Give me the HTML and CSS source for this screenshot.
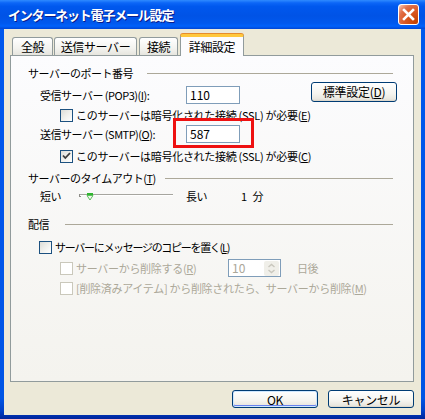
FILE: index.html
```html
<!DOCTYPE html>
<html lang="ja">
<head>
<meta charset="utf-8">
<title>インターネット電子メール設定</title>
<link rel="stylesheet" href="styles.css">
</head>
<body>
<div class="window">
  <div class="titlebar">
    <span class="title">インターネット電子メール設定</span>
    <span class="close">
      <svg width="19" height="19" viewBox="0 0 19 19"><path d="M5 5 L14 14 M14 5 L5 14" stroke="#fff" stroke-width="2.6" stroke-linecap="square" fill="none"/></svg>
    </span>
  </div>
  <div class="client">
    <div class="tabs">
      <span class="tab t1">全般</span>
      <span class="tab t2">送信サーバー</span>
      <span class="tab t3">接続</span>
      <span class="tab active t4">詳細設定</span>
    </div>
    <div class="panel">
      <div class="row heading r-a">
        <span class="htext hw-port">サーバーのポート番号</span><span class="rule"></span>
      </div>
      <div class="row r-b">
        <span class="label">受信サーバー (POP3)(<u>I</u>):</span>
        <span class="input">110</span>
        <span class="btn btn-std">標準設定(<u>D</u>)</span>
      </div>
      <div class="row r-c">
        <span class="check"></span><span class="ctext">このサーバーは暗号化された接続 (SSL) が必要(<u>E</u>)</span>
      </div>
      <div class="row r-d">
        <span class="label">送信サーバー (SMTP)(<u>O</u>):</span>
        <span class="input">587</span>
        <span class="mark"></span>
      </div>
      <div class="row r-e">
        <span class="check checked"><svg width="11" height="11" viewBox="0 0 11 11"><path d="M2 4.5 L4.3 7 L9 2" stroke="#3c3c3c" stroke-width="1.8" fill="none"/></svg></span><span class="ctext">このサーバーは暗号化された接続 (SSL) が必要(<u>C</u>)</span>
      </div>
      <div class="row heading r-f">
        <span class="htext hw-timeout">サーバーのタイムアウト(<u>T</u>)</span><span class="rule"></span>
      </div>
      <div class="row r-g">
        <span class="s-short">短い</span>
        <svg class="slider" width="95" height="14" viewBox="0 0 95 14">
          <rect x="0" y="5" width="2" height="3" fill="#8f8e89"/>
          <rect x="1" y="5" width="93" height="1" fill="#a6a59f"/>
          <rect x="1" y="6" width="93" height="1" fill="#ffffff"/>
          <rect x="8" y="4" width="6" height="2" fill="#2fb52f"/>
          <path d="M8 6.5 L14 6.5 L11 11 Z" fill="#f4f4f0" stroke="#4cb84c" stroke-width="0.9"/>
        </svg>
        <span class="s-long">長い</span>
        <span class="s-val">1 分</span>
      </div>
      <div class="row heading r-h">
        <span class="htext hw-deliv">配信</span><span class="rule"></span>
      </div>
      <div class="row r-i">
        <span class="check"></span><span class="ctext tight">サーバーにメッセージのコピーを置く(<u>L</u>)</span>
      </div>
      <div class="row r-j">
        <span class="jwrap"><span class="check disabled"></span><span class="ctext dis">サーバーから削除する(<u>R</u>)</span></span>
        <span class="spin"><span class="spin-val">10</span><span class="spin-btn"><svg width="15" height="15" viewBox="0 0 15 15"><path d="M4.5 6 L7.5 3.5 L10.5 6 M4.5 9 L7.5 11.5 L10.5 9" stroke="#c9c7bd" stroke-width="1.4" fill="none"/></svg></span></span>
        <span class="days dis">日後</span>
      </div>
      <div class="row r-k">
        <span class="check disabled"></span><span class="ctext dis">[削除済みアイテム] から削除されたら、サーバーから削除(<u>M</u>)</span>
      </div>
    </div>
    <div class="buttons">
      <span class="btn btn-default">OK</span>
      <span class="btn">キャンセル</span>
    </div>
  </div>
</div>
</body>
</html>
```

FILE: styles.css
```css
* { box-sizing: border-box; }
html, body { margin: 0; padding: 0; }
body {
  width: 425px;
  height: 419px;
  overflow: hidden;
  background: #0055e5;
  font-family: "Noto Sans CJK JP", "Noto Sans", sans-serif;
  font-size: 11px;
  letter-spacing: -0.5px;
  color: #000;
}
u { text-decoration: underline; text-underline-offset: 1px; }

.window {
  width: 425px;
  height: 419px;
  display: flex;
  flex-direction: column;
  background: linear-gradient(to bottom, #0058ee 0, #0055e5 95%, #0040c8 98%, #00249a 100%);
}

.titlebar {
  height: 29px;
  flex: none;
  display: flex;
  align-items: center;
  padding: 0 6px 1px 8px;
  background: linear-gradient(to bottom, #2f8bff 0%, #0c66f7 10%, #0058ee 22%, #0053e6 55%, #0058ee 80%, #0061fb 90%, #0046d5 100%);
}
.title {
  flex: 1;
  color: #fff;
  font-weight: bold;
  font-size: 13px;
  letter-spacing: -1.2px;
  text-shadow: 1px 1px 0 #0a1d8c;
}
.close {
  width: 21px;
  height: 21px;
  display: flex;
  align-items: center;
  justify-content: center;
  border: 1px solid #fff;
  border-radius: 3px;
  background: radial-gradient(circle at 90% 90%, #c44100 0%, #dc5a26 50%, #e0704a 72%, #f6b39a 92%, #ffffff 100%);
}

.client {
  flex: 1;
  margin: 0 4px 4px;
  background: #ece9d8;
  padding: 5px 7px 0 6px;
  display: flex;
  flex-direction: column;
}

.tabs {
  height: 21px;
  display: flex;
  align-items: flex-end;
  padding-left: 2px;
  position: relative;
  z-index: 1;
}
.tab {
  height: 18px;
  border: 1px solid #919b9c;
  border-bottom: none;
  border-radius: 3px 3px 0 0;
  background: linear-gradient(to bottom, #ffffff, #f3f3ef 60%, #e6e5de);
  display: flex;
  align-items: center;
  justify-content: center;
  font-size: 12px;
  letter-spacing: -0.4px;
}
.t1 { width: 41px; margin-right: 1px; }
.t2 { width: 83px; margin-right: 2px; }
.t3 { width: 39px; margin-right: 2px; }
.t4 { width: 64px; }
.tab.active {
  height: 22px;
  margin-bottom: -1px;
  background: #fcfcfe;
  border-top: 3px solid #ffc83c;
  box-shadow: 0 -1px 0 #e68b2c;
  padding-bottom: 1px;
}

.panel {
  height: 327px;
  border: 1px solid #919b9c;
  background: linear-gradient(to bottom, #fcfcfe, #f4f3ee);
  position: relative;
}

.row {
  display: flex;
  align-items: center;
  height: 14px;
  line-height: 14px;
  white-space: nowrap;
}
.heading { padding-left: 17px; padding-right: 20px; }
.rule { flex: 1; height: 1px; background: #aca899; }
.hw-port { width: 119px; }
.hw-timeout { width: 137px; }
.hw-deliv { width: 37px; }

.r-a { margin-top: 10px; }
.r-b { margin-top: 2px; height: 22px; align-items: flex-start; padding-left: 29px; }
.r-b .label { margin-top: 6px; }
.r-b .input { margin-top: 4px; }
.r-c { margin-top: 4px; padding-left: 49px; }
.r-d { margin-top: 3px; height: 18px; padding-left: 29px; position: relative; }
.r-e { margin-top: 6px; padding-left: 49px; }
.r-f { margin-top: 8px; }
.r-g { margin-top: 4px; padding-left: 29px; }
.r-h { margin-top: 14px; }
.r-i { margin-top: 9px; padding-left: 28px; }
.r-j { margin-top: 5px; height: 18px; padding-left: 49px; }
.r-k { margin-top: 4px; padding-left: 49px; }

.label { width: 146px; }
.input {
  width: 54px;
  height: 18px;
  border: 1px solid #7f9db9;
  background: #fff;
  padding-left: 3px;
  line-height: 15px;
  font-size: 12px;
  letter-spacing: 0;
}

.mark {
  position: absolute;
  left: 162px;
  top: -7px;
  width: 81px;
  height: 30px;
  border: 3px solid #ee1111;
}

.check {
  width: 13px;
  height: 13px;
  flex: none;
  border: 1px solid #1c5180;
  background: linear-gradient(135deg, #dcdcd7 0%, #eeeeea 45%, #ffffff 100%);
  margin-right: 3px;
  display: flex;
  align-items: center;
  justify-content: center;
}
.check.disabled {
  border-color: #cac8bb;
  background: #fff;
}
.dis { color: #aca899; }
.ctext { letter-spacing: -0.3px; }
.ctext.tight { letter-spacing: -1.3px; }

.btn {
  display: flex;
  align-items: center;
  justify-content: center;
  border: 1px solid #003c74;
  border-radius: 3px;
  background: linear-gradient(to bottom, #ffffff 0%, #f5f4ef 60%, #e9e7df 90%, #d8d2c6 100%);
  font-size: 12px;
  letter-spacing: -0.3px;
}
.btn-std {
  width: 86px;
  height: 20px;
  margin-left: 71px;
}

.s-short { width: 40px; }
.slider { margin-left: -1px; margin-right: 12px; }
.s-long { width: 55px; }
.s-val { word-spacing: 4px; }

.jwrap { width: 168px; display: flex; align-items: center; }
.spin {
  width: 53px;
  height: 18px;
  border: 1px solid #7f9db9;
  background: #fff;
  display: flex;
  align-items: center;
  justify-content: space-between;
  padding: 0 1px 0 3px;
}
.spin-val { color: #aca899; font-size: 12px; letter-spacing: 0; }
.spin-btn {
  width: 15px;
  height: 15px;
  border-radius: 2px;
  background: #f0efe9;
  display: flex;
}
.days { margin-left: 16px; }

.buttons {
  margin-top: 8px;
  display: flex;
  justify-content: flex-end;
  gap: 10px;
}
.buttons .btn { width: 86px; height: 18px; }
.btn-default { box-shadow: inset 0 0 0 1px #cee7ff, inset 0 -1px 0 1px #6982ee; }
```
